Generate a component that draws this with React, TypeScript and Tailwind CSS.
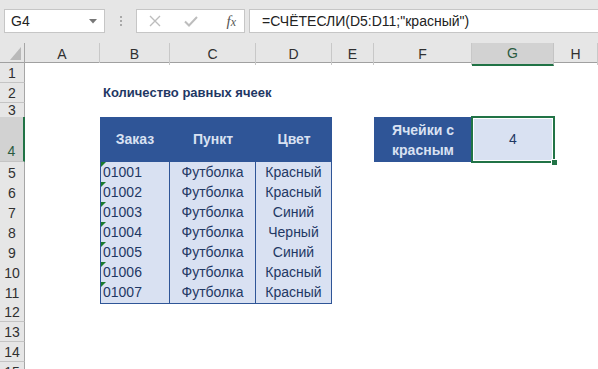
import React from 'react';

const COLS = 'grid grid-cols-[25px_75px_70px_86px_76px_42px_98px_82px_1fr]';

const data = [
  ['01001', 'Футболка', 'Красный'],
  ['01002', 'Футболка', 'Красный'],
  ['01003', 'Футболка', 'Синий'],
  ['01004', 'Футболка', 'Черный'],
  ['01005', 'Футболка', 'Синий'],
  ['01006', 'Футболка', 'Красный'],
  ['01007', 'Футболка', 'Красный'],
];

const letters = ['A', 'B', 'C', 'D', 'E', 'F', 'G', 'H'];

// green error triangle in the top left of a cell
const Flag = () => (
  <span className="absolute left-0 top-0 w-0 h-0 border-t-[5px] border-t-[#1a7a2e] border-r-[5px] border-r-transparent" />
);

const RowHead = ({ n, active, tall }: { n: number; active?: boolean; tall?: boolean }) => (
  <div
    className={`flex justify-center border-b border-[#c4c4c4] text-[14px] leading-none ${
      active
        ? 'bg-[#d2d2d2] border-r-2 border-r-[#217346] text-[#2a5b40] items-end pb-[3px]'
        : 'bg-[#e6e6e6] border-r border-r-[#a6a6a6] text-[#303030] items-center'
    } ${tall ? '' : ''}`}
  >
    {n}
  </div>
);

const Empty = () => <div className="bg-white" />;

export default function App() {
  return (
    <div className="w-[598px] h-[369px] overflow-hidden bg-white font-['Liberation_Sans',Arial,sans-serif]">
      {/* formula bar */}
      <div className="flex h-[43px] items-start pt-[9px] bg-[#e6e6e6]">
        <div className="ml-[4px] w-[101px] h-[24px] bg-white border border-[#c6c6c6] flex items-center justify-between pl-[6px] pr-[7px] text-[14px] text-[#222]">
          <span>G4</span>
          <svg width="8" height="5" viewBox="0 0 8 5"><path d="M0 0h8L4 4.5z" fill="#777" /></svg>
        </div>
        <div className="w-[31px] h-[24px] flex flex-col items-center justify-center gap-[2px]">
          <span className="w-[2px] h-[2px] bg-[#a8a8a8]" />
          <span className="w-[2px] h-[2px] bg-[#a8a8a8]" />
          <span className="w-[2px] h-[2px] bg-[#a8a8a8]" />
        </div>
        <div className="w-[109px] h-[24px] bg-white border border-[#c6c6c6] flex items-center pl-[12px] pr-[8px]">
          <svg width="12" height="12" viewBox="0 0 12 12">
            <path d="M1 1l10 10M11 1L1 11" stroke="#bdbdbd" strokeWidth="1.4" />
          </svg>
          <svg className="ml-[23px]" width="14" height="11" viewBox="0 0 14 11">
            <path d="M1 5.5l4 4L13 1" stroke="#bdbdbd" strokeWidth="2" fill="none" />
          </svg>
          <span className="ml-auto italic font-['Liberation_Serif',serif] text-[15px] text-[#555]">
            f<span className="text-[12px]">x</span>
          </span>
        </div>
        <div className="ml-[4px] flex-1 h-[24px] bg-white border border-r-0 border-[#c6c6c6] flex items-center pl-[12px] text-[14px] text-[#222] whitespace-nowrap">
          =СЧЁТЕСЛИ(D5:D11;"красный")
        </div>
      </div>

      {/* column headers */}
      <div className={`${COLS} h-[20px] bg-[#e6e6e6] border-b border-[#a0a0a0]`}>
        <div className="relative border-r border-[#a6a6a6]">
          <svg className="absolute left-0 top-0" width="24" height="20" viewBox="0 0 24 20">
            <path d="M21 4v13H10z" fill="#b9b9b9" />
          </svg>
        </div>
        {letters.map((l) =>
          l === 'G' ? (
            <div key={l} className="flex items-center justify-center bg-[#d2d2d2] border-r border-[#c4c4c4] border-b-2 border-b-[#217346] text-[14px] text-[#2a5b40] -mb-[1px]">
              {l}
            </div>
          ) : (
            <div key={l} className="flex items-center justify-center border-r border-[#c8c8c8] text-[14px] text-[#303030]">
              {l}
            </div>
          )
        )}
      </div>

      {/* row 1 */}
      <div className={`${COLS} h-[20px]`}>
        <RowHead n={1} />
        <Empty />
      </div>

      {/* row 2 : title */}
      <div className={`${COLS} h-[20px]`}>
        <RowHead n={2} />
        <Empty />
        <div className="flex items-center pl-[3px] whitespace-nowrap text-[13px] font-bold text-[#1f3864]">
          Количество равных ячеек
        </div>
      </div>

      {/* row 3 */}
      <div className={`${COLS} h-[14px]`}>
        <RowHead n={3} />
        <Empty />
      </div>

      {/* row 4 : table header + result */}
      <div className={`${COLS} h-[45px]`}>
        <RowHead n={4} active tall />
        <Empty />
        <div className="flex items-center justify-center bg-[#2f5597] text-[14px] font-bold text-[#d9e1f2]">Заказ</div>
        <div className="flex items-center justify-center bg-[#2f5597] text-[14px] font-bold text-[#d9e1f2]">Пункт</div>
        <div className="flex items-center justify-center bg-[#2f5597] text-[14px] font-bold text-[#d9e1f2]">Цвет</div>
        <Empty />
        <div className="flex items-center justify-center text-center bg-[#2f5597] text-[14px] leading-[20px] font-bold text-[#d9e1f2]">
          Ячейки с<br />красным
        </div>
        <div className="relative flex items-center justify-center bg-[#d9e1f2] text-[14px] text-[#1f3864]">
          4
          <span className="absolute -left-[1px] -top-[1px] -right-[1px] -bottom-[1px] border-2 border-[#217346] shadow-[inset_0_0_0_1px_white]" />
          <span className="absolute -right-[4px] -bottom-[4px] w-[7px] h-[7px] bg-[#217346] border border-white" />
        </div>
      </div>

      {/* rows 5-11 */}
      {data.map((r, i) => (
        <div key={r[0]} className={`${COLS} h-[20px]`}>
          <RowHead n={5 + i} />
          <Empty />
          <div className="relative flex items-center pl-[2px] bg-[#d9e1f2] border-l border-r border-b border-[#2f5597] text-[14px] text-[#1f3864]">
            <Flag />
            {r[0]}
          </div>
          <div className="flex items-center justify-center bg-[#d9e1f2] border-r border-b border-[#2f5597] text-[14px] text-[#1f3864]">
            {r[1]}
          </div>
          <div className="flex items-center justify-center bg-[#d9e1f2] border-r border-b border-[#2f5597] text-[14px] text-[#1f3864]">
            {r[2]}
          </div>
        </div>
      ))}

      {/* empty rows */}
      {[12, 13, 14, 15].map((n) => (
        <div key={n} className={`${COLS} h-[20px]`}>
          <RowHead n={n} />
          <Empty />
        </div>
      ))}
    </div>
  );
}
